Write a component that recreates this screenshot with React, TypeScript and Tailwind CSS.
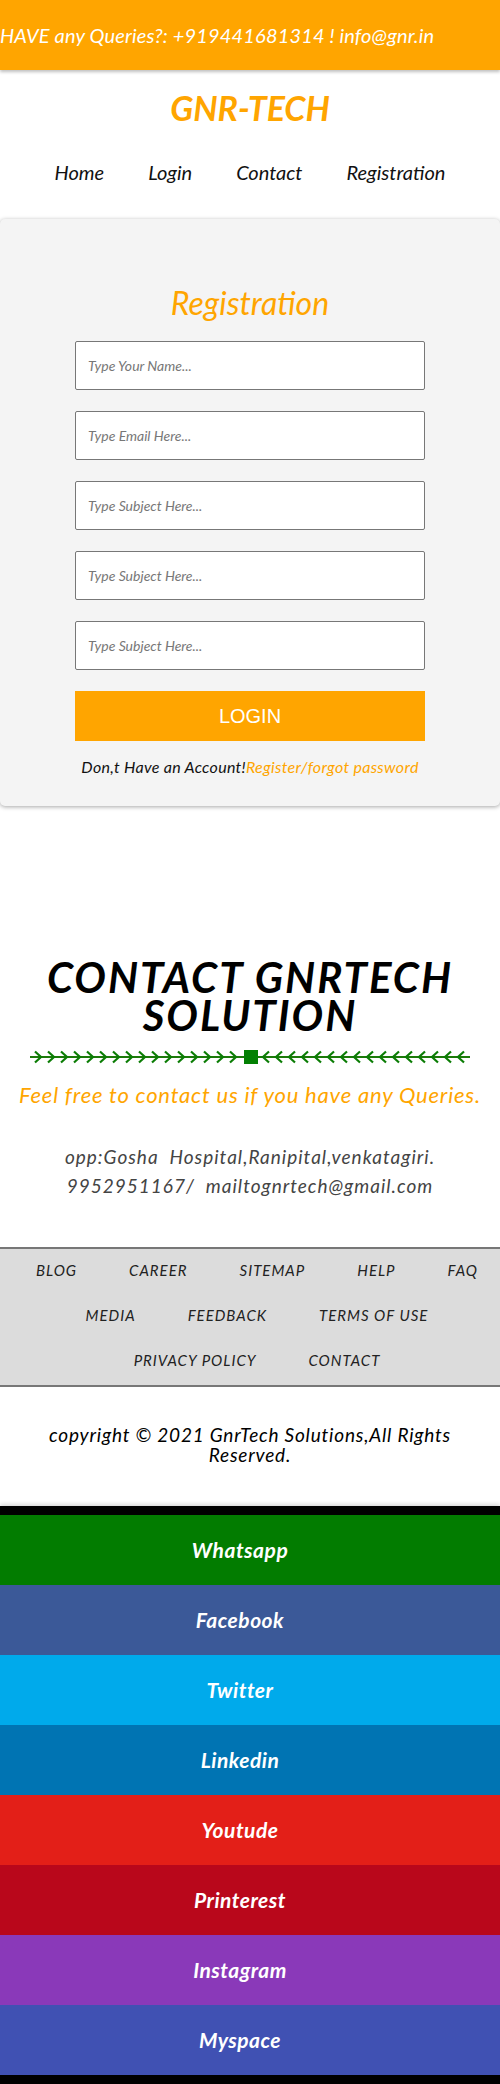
import React from "react";

const font = { fontFamily: "Lato, 'Open Sans', sans-serif" };

const navLinks = ["Home", "Login", "Contact", "Registration"];

const fields = [
  "Type Your Name...",
  "Type Email Here...",
  "Type Subject Here...",
  "Type Subject Here...",
  "Type Subject Here...",
];

const footerRows = [
  ["BLOG", "CAREER", "SITEMAP", "HELP", "FAQ"],
  ["MEDIA", "FEEDBACK", "TERMS OF USE"],
  ["PRIVACY POLICY", "CONTACT"],
];

const socials = [
  { name: "Whatsapp", bg: "bg-[#027c00]" },
  { name: "Facebook", bg: "bg-[#3b5998]" },
  { name: "Twitter", bg: "bg-[#00aaeb]" },
  { name: "Linkedin", bg: "bg-[#0074b3]" },
  { name: "Youtude", bg: "bg-[#e31f18]" },
  { name: "Printerest", bg: "bg-[#b9071b]" },
  { name: "Instagram", bg: "bg-[#8a39b9]" },
  { name: "Myspace", bg: "bg-[#4051b3]" },
];

// green arrow divider under the contact heading
const ArrowLine = () => {
  const left = Array.from({ length: 16 }, (_, i) => 5 + i * 13);
  const right = Array.from({ length: 16 }, (_, i) => 233 + i * 13);
  return (
    <svg width="440" height="14" viewBox="0 0 440 14" className="mx-auto block">
      <line x1="0" y1="7" x2="440" y2="7" stroke="#1d7a0a" strokeWidth="2" />
      {left.map((x) => (
        <path key={x} d={`M${x} 1.5 L${x + 6} 7 L${x} 12.5`} fill="none" stroke="#0b7d05" strokeWidth="2.2" />
      ))}
      <rect x="214" y="0" width="14" height="14" fill="#038003" />
      {right.map((x) => (
        <path key={x} d={`M${x + 6} 1.5 L${x} 7 L${x + 6} 12.5`} fill="none" stroke="#0b7d05" strokeWidth="2.2" />
      ))}
    </svg>
  );
};

export default function App() {
  return (
    <div className="w-[500px] bg-white" style={font}>
      {/* top info bar */}
      <div className="relative z-10 flex h-[70px] items-center bg-[#ffa500] text-[20px] tracking-[0.15px] italic text-white shadow-[0_2px_3px_rgba(0,0,0,0.25)]">
        HAVE any Queries?: +919441681314 ! info@gnr.in
      </div>

      {/* header */}
      <header className="pt-[18px] pb-[35px] text-center">
        <h1 className="text-[34px] font-bold italic leading-[40px] text-[#ffa500]">GNR-TECH</h1>
        <nav className="mt-[32px] flex justify-center gap-[44px] text-[20px] italic leading-[24px] text-[#111]">
          {navLinks.map((l) => (
            <a key={l} href="#">
              {l}
            </a>
          ))}
        </nav>
      </header>

      {/* registration card */}
      <section className="rounded-[5px] bg-[#f4f4f4] pt-[66px] pb-[29px] shadow-[0_1px_4px_rgba(0,0,0,0.35)]">
        <h2 className="text-center text-[32px] italic leading-[36px] text-[#ffa500]">Registration</h2>
        <form className="mx-auto mt-[20px] flex w-[350px] flex-col gap-[21px]">
          {fields.map((f, i) => (
            <input
              key={i}
              placeholder={f}
              className="h-[49px] rounded-[2px] border border-[#777] bg-white px-[12px] text-[14px] italic placeholder:text-[#777]"
            />
          ))}
          <button
            type="button"
            className="h-[50px] bg-[#ffa500] text-[20px] text-white"
            style={{ fontFamily: "'Liberation Sans', Arial, sans-serif" }}
          >
            LOGIN
          </button>
        </form>
        <p className="mt-[16px] text-center text-[16px] tracking-[0.3px] italic leading-[20px] text-[#111]">
          Don,t Have an Account!<span className="text-[#ffa500]">Register/forgot password</span>
        </p>
      </section>

      {/* contact */}
      <section className="mt-[152px] text-center">
        <h2 className="mx-auto w-[460px] text-[42px] font-bold italic leading-[38px] tracking-[2px] text-black">
          CONTACT GNRTECH SOLUTION
        </h2>
        <div className="mt-[16px]">
          <ArrowLine />
        </div>
        <p className="mt-[18px] text-[22px] italic leading-[26px] tracking-[0.8px] text-[#ffa500]">
          Feel free to contact us if you have any Queries.
        </p>
        <div className="mt-[34px] text-[19px] italic leading-[29px] tracking-[1px] text-[#444]">
          <p>opp:Gosha&nbsp; Hospital,Ranipital,venkatagiri.</p>
          <p>9952951167/&nbsp; mailtognrtech@gmail.com</p>
        </div>
      </section>

      {/* footer links */}
      <div className="mt-[47px] flex flex-col gap-[25px] border-y-2 border-[#777] bg-[#dcdcdc] pt-[11px] pb-[15px] pl-[14px] text-[15px] italic leading-[20px] tracking-[1px] text-[#222]">
        {footerRows.map((row, i) => (
          <div key={i} className="flex justify-center gap-x-[52px]">
            {row.map((l) => (
              <a key={l} href="#">
                {l}
              </a>
            ))}
          </div>
        ))}
      </div>

      <p className="mx-auto mt-[38px] w-[440px] text-center text-[19px] italic leading-[20px] tracking-[0.8px] text-black">
        copyright © 2021 GnrTech Solutions,All Rights Reserved.
      </p>

      {/* social bars */}
      <div className="mt-[41px] bg-black py-[9px] shadow-[0_-2px_4px_rgba(0,0,0,0.15)]">
        {socials.map((s) => (
          <div
            key={s.name}
            className={`flex h-[70px] items-center justify-center pr-[20px] text-[21px] font-bold italic tracking-[0.5px] text-white ${s.bg}`}
          >
            {s.name}
          </div>
        ))}
      </div>
    </div>
  );
}
